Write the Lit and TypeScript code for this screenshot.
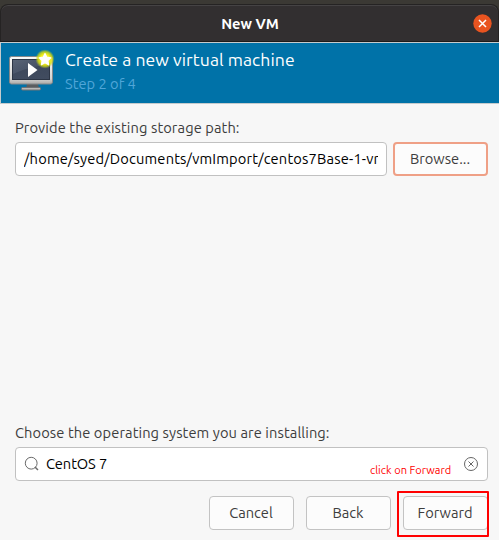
import { LitElement, html, css } from "lit";
import { customElement } from "lit/decorators.js";

const monitorIcon = html`<svg class="monitor" width="48" height="48" viewBox="0 0 48 48">
  <defs>
    <linearGradient id="frame" x1="0" y1="0" x2="0" y2="1"><stop offset="0" stop-color="#fafafa" /><stop offset=".8" stop-color="#d4d4d2" /><stop offset="1" stop-color="#aaa9a7" /></linearGradient>
    <linearGradient id="screen" x1="0" y1="0" x2="0" y2="1"><stop offset="0" stop-color="#3b4658" /><stop offset="1" stop-color="#414c60" /></linearGradient>
    <linearGradient id="shine" x1="0" y1="0" x2="1" y2="1"><stop offset="0" stop-color="#8793a6" stop-opacity=".4" /><stop offset="1" stop-color="#65718a" stop-opacity=".05" /></linearGradient>
    <radialGradient id="glow"><stop offset="0" stop-color="#fffb9c" /><stop offset=".5" stop-color="#f2f01c" /><stop offset=".75" stop-color="#d6dc10" stop-opacity=".8" /><stop offset="1" stop-color="#a9c830" stop-opacity="0" /></radialGradient>
  </defs>
  <path d="M19 35h11l1 4H18z" fill="#5b5e60" />
  <rect x="13.5" y="38.5" width="19" height="2.500" rx="1" fill="#b9b9b7" stroke="#6f7275" />
  <rect x="1.500" y="7.500" width="43" height="27.500" rx="2" fill="url(#frame)" stroke="#85888a" />
  <rect x="4.500" y="10.500" width="37" height="20" fill="url(#screen)" stroke="#2c3545" />
  <path d="M5 11h36v4.500Q22 17 5 25z" fill="url(#shine)" />
  <path d="M20 14v14l9.500-7z" fill="#fff" />
  <circle cx="37" cy="10" r="9.700" fill="url(#glow)" />
  <path d="M37 4.500l1.800 3.700 4 .6-2.900 2.900.7 4.100-3.600-2-3.600 2 .7-4.100-2.900-2.900 4-.6z" fill="#fff" stroke="#fff" stroke-width="1.200" stroke-linejoin="round" />
</svg>`;

const closeIcon = html`<svg width="19" height="19" viewBox="0 0 19 19">
  <circle cx="9.500" cy="9.500" r="9.200" fill="#e95420" />
  <path d="M6 6l7 7M13 6l-7 7" stroke="#fff" stroke-width="1.500" />
</svg>`;

const searchIcon = html`<svg width="16" height="16" viewBox="0 0 16 16" fill="none" stroke="#6b6b6b">
  <circle cx="7.200" cy="7.200" r="5.900" stroke-width="1" />
  <path d="M11 11l3 3" stroke-width="1.500" />
</svg>`;

const clearIcon = html`<svg width="16" height="16" viewBox="0 0 16 16" fill="none" stroke="#666">
  <circle cx="8" cy="8" r="6.500" />
  <path d="M5.500 5.500l5 5M10.500 5.500l-5 5" stroke-width="1" />
</svg>`;

@customElement("app-root")
export class AppRoot extends LitElement {
  static styles = css`
    :host { display: block; width: 499px; height: 540px; overflow: hidden; background: #3b3934;
      font: 14.667px/20px Ubuntu, "Noto Sans", sans-serif; color: #3d3d3d; }
    * { box-sizing: border-box; }
    .window { position: relative; height: 540px; padding-top: 4px; display: flex; flex-direction: column; white-space: nowrap; }
    .titlebar { height: 38px; flex: none; display: grid; grid-template-columns: 1fr auto 1fr; align-items: center;
      background: #322f30; border: 1px solid #252323; border-bottom: 1px solid #1d1b1b; border-radius: 8px 8px 0 0;
      box-shadow: inset 0 1px #454344; padding: 0 6px 0 0; }
    .title { grid-column: 2; color: #fff; font-weight: 700; font-size: 14.667px; padding: 1px 0 0 7px; }
    .close { justify-self: end; height: 19px; }
    svg { display: block; flex: none; }
    .banner { height: 62px; flex: none; display: flex; background: #0072a8; border: 1px solid #c5cbcd; border-right: 0; padding: 6px 0 0 7px; }
    .heading { margin-left: 9px; }
    .h1 { color: #fff; font-size: 17.6px; line-height: 22px; letter-spacing: .06px; }
    .h2 { color: #50a6d8; font-size: 14.667px; line-height: 20px; margin-top: 3px; }
    .body { flex: 1; background: #f7f7f7; padding: 14px 11px 10px 15px; display: flex; flex-direction: column; }
    .label { height: 20px; margin-bottom: 4px; letter-spacing: .09px; }
    .row { display: flex; gap: 6px; }
    .entry { height: 34px; border: 1px solid #c1c1c1; border-radius: 4px; background: #fff; color: #000;
      display: flex; align-items: center; padding: 0 8px; }
    .path { width: 372px; letter-spacing: .17px; }
    .clip { overflow: hidden; }
    .button { height: 34px; width: 85px; border: 1px solid #c3c3c3; border-radius: 4px; background: #fcfcfc;
      display: flex; align-items: center; justify-content: center; padding-right: 1px; }
    .browse { width: 95px; border: 2px solid #efa086; }
    .spacer { flex: 1; }
    .os { width: 473px; }
    .os .value { flex: 1; margin-left: 6px; letter-spacing: -.1px; }
    .actions { display: flex; gap: 12px; margin: 15px 0 0 194px; }
    .highlight { position: absolute; left: 397px; top: 491px; width: 92px; height: 46px; border: 2px solid #ff0000; border-radius: 1px; }
    .note { position: absolute; left: 370px; top: 462px; font-size: 11px; line-height: 16px; letter-spacing: .05px; color: #ff0000; }
  `;

  render() {
    return html`<div class="window">
      <div class="titlebar"><span class="title">New VM</span><span class="close">${closeIcon}</span></div>
      <div class="banner">${monitorIcon}
        <div class="heading"><div class="h1">Create a new virtual machine</div><div class="h2">Step 2 of 4</div></div>
      </div>
      <div class="body">
        <div class="label">Provide the existing storage path:</div>
        <div class="row">
          <div class="entry path"><span class="clip">/home/syed/Documents/vmImport/centos7Base-1-vm</span></div>
          <div class="button browse">Browse...</div>
        </div>
        <div class="spacer"></div>
        <div class="label">Choose the operating system you are installing:</div>
        <div class="entry os">${searchIcon}<span class="value">CentOS 7</span>${clearIcon}</div>
        <div class="actions">
          <div class="button">Cancel</div><div class="button">Back</div><div class="button">Forward</div>
        </div>
      </div>
      <div class="note">click on Forward</div>
      <div class="highlight"></div>
    </div>`;
  }
}
